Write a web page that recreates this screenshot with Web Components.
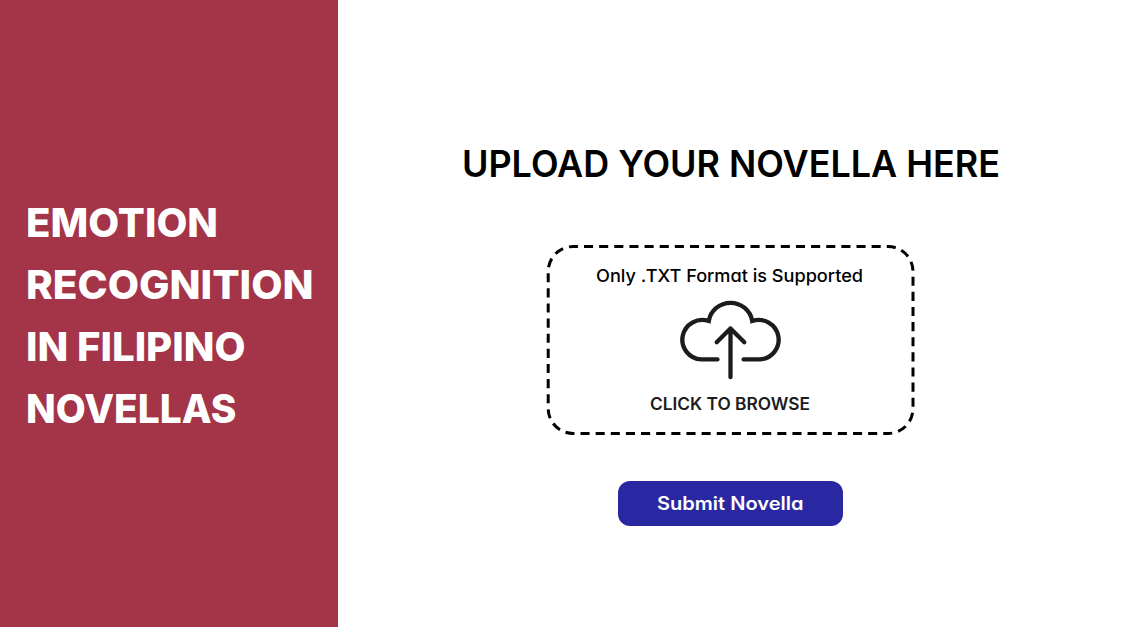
<!DOCTYPE html>
<html lang="en">
<head>
<meta charset="utf-8">
<title>Emotion Recognition in Filipino Novellas</title>
<style>
html,body{margin:0;height:100%;background:#fff;overflow:hidden}
body{font-family:Inter,"Liberation Sans",sans-serif;font-feature-settings:"cv11" 1}
</style>
</head>
<body>
<novella-app></novella-app>
<script>
const define=(name,html,setup)=>customElements.define(name,class extends HTMLElement{
  constructor(){super();this.attachShadow({mode:'open'}).innerHTML=html;}
  connectedCallback(){if(setup)setup(this);}
});

/* One line of text, stretched horizontally to the width given in its attribute. */
define('fit-text',`<style>
:host{display:block;white-space:nowrap;text-align:left}
span{display:inline-block;transform-origin:0 50%}
</style><span><slot></slot></span>`,el=>{
  const fit=()=>{
    const s=el.shadowRoot.querySelector('span');
    const w=parseFloat(el.getAttribute('width'));
    s.style.transform='none';
    const k=w/s.getBoundingClientRect().width;
    s.style.transform='scaleX('+k+')';
    el.style.width=w+'px';
  };
  fit();
  document.fonts.ready.then(fit);
});

define('side-panel',`<style>
:host{display:flex;flex-direction:column;justify-content:center;box-sizing:border-box;width:338.4px;height:100%;padding:5px 0 0 26px;background:#a43447;color:#fff}
h1{margin:0;font-size:40px;font-weight:780;line-height:62px}
</style><h1>
<fit-text width="192">EMOTION</fit-text>
<fit-text width="287.5">RECOGNITION</fit-text>
<fit-text width="219.5">IN FILIPINO</fit-text>
<fit-text width="210.5">NOVELLAS</fit-text></h1>`);

define('cloud-icon',`<style>
:host{display:block;width:120px;height:100px}
svg{display:block}
</style><svg width="120" height="100" fill="none" stroke="#1c1c1c" stroke-width="4.3" stroke-linecap="round">
<path d="M47.6 69.5H31.5A19.75 19.75 0 1 1 39 31.1A21.8 21.8 0 0 1 82 31.1A19.75 19.75 0 1 1 89.5 69.5H73.5" transform="translate(60.5 0) scale(1.01 1) translate(-60.5 -.1)"/>
<path d="M60.5 87.2V38.5M46.7 52.3L60.5 38.5L74.3 52.3" stroke-linejoin="round"/>
</svg>`);

define('drop-zone',`<style>
:host{display:grid;width:368px;height:190px}
svg,.content{grid-area:1/1}
svg{overflow:visible}
.content{display:flex;flex-direction:column;align-items:center}
.hint{margin-top:17px;font-size:17.4px;font-weight:450;line-height:27.4px;color:#000}
cloud-icon{margin-top:.2px}
.browse{font-size:17px;font-weight:600;line-height:28.8px;color:#1c1c1c}
.hint{padding-right:2px}
.browse{padding-right:1px}
</style>
<svg width="368" height="190" fill="none"><rect x="2.2" y="1.5" width="364.8" height="187" rx="25" stroke="#000" stroke-width="3" pathLength="1050" stroke-dasharray="9 6" stroke-dashoffset="4.3"/></svg>
<div class="content">
<fit-text class="hint" width="267">Only .TXT Format is Supported</fit-text>
<cloud-icon></cloud-icon>
<fit-text class="browse" width="160">CLICK TO BROWSE</fit-text>
</div>`);

define('submit-button',`<style>
:host{display:block}
button{display:flex;align-items:center;justify-content:center;box-sizing:border-box;width:225px;height:45.4px;margin:0;padding:0 0 1px;border:0;border-radius:12px;background:#2a27a2;color:#fff;font:600 18.4px Inter,sans-serif;font-feature-settings:"cv11" 1}
</style><button type="button"><fit-text width="146.5">Submit Novella</fit-text></button>`);

define('upload-view',`<style>
:host{display:flex;flex:1;flex-direction:column;align-items:center}
h2{margin:134px 0 0 1px;font-size:36.8px;font-weight:600;line-height:60px;color:#000}
drop-zone{margin-top:51px}
submit-button{margin-top:46px}
</style>
<h2><fit-text width="538">UPLOAD YOUR NOVELLA HERE</fit-text></h2>
<drop-zone></drop-zone>
<submit-button></submit-button>`);

define('novella-app',`<style>
:host{display:flex;height:627px;width:1122px;background:#fff}
</style><side-panel></side-panel><upload-view></upload-view>`);
</script>
</body>
</html>
